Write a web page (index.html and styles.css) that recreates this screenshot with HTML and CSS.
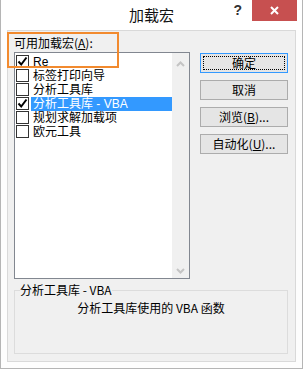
FILE: index.html
```html
<!DOCTYPE html>
<html lang="zh-CN">
<head>
    <meta charset="UTF-8">
    <title>加载宏</title>
    <link rel="stylesheet" href="styles.css">
</head>
<body>
    <div class="window">
        <div class="titlebar">
            <span></span>
            <span class="title">加载宏</span>
            <div class="controls">
                <span class="help">?</span>
                <span class="close">
                    <svg width="9" height="9" viewBox="0 0 9 9"><path d="M1 1 L8 8 M8 1 L1 8" stroke="#fff" stroke-width="2"/></svg>
                </span>
            </div>
        </div>

        <div class="panel">
            <div class="main">
                <div class="label">可用加载宏(<u>A</u>):</div>

                <div class="listbox">
                    <div class="items">
                        <div class="item">
                            <span class="box checked"><svg width="11" height="11" viewBox="0 0 11 11"><path d="M1.5 5.5 L4.2 8.5 L9.5 1.5" fill="none" stroke="#000" stroke-width="2"/></svg></span>
                            <span class="text">Re</span>
                        </div>
                        <div class="item">
                            <span class="box"></span>
                            <span class="text">标签打印向导</span>
                        </div>
                        <div class="item">
                            <span class="box"></span>
                            <span class="text">分析工具库</span>
                        </div>
                        <div class="item selected">
                            <span class="box checked"><svg width="11" height="11" viewBox="0 0 11 11"><path d="M1.5 5.5 L4.2 8.5 L9.5 1.5" fill="none" stroke="#000" stroke-width="2"/></svg></span>
                            <span class="text">分析工具库 - VBA</span>
                        </div>
                        <div class="item">
                            <span class="box"></span>
                            <span class="text">规划求解加载项</span>
                        </div>
                        <div class="item">
                            <span class="box"></span>
                            <span class="text">欧元工具</span>
                        </div>
                    </div>
                    <div class="scrollbar">
                        <svg width="9" height="6" viewBox="0 0 9 6"><path d="M1 5 L4.5 1.5 L8 5" fill="none" stroke="#c4c4c4" stroke-width="2"/></svg>
                        <svg width="9" height="6" viewBox="0 0 9 6"><path d="M1 1 L4.5 4.5 L8 1" fill="none" stroke="#c4c4c4" stroke-width="2"/></svg>
                    </div>
                </div>

                <div class="buttons">
                    <button class="btn default">确定</button>
                    <button class="btn">取消</button>
                    <button class="btn">浏览(<u>B</u>)...</button>
                    <button class="btn">自动化(<u>U</u>)...</button>
                </div>
            </div>

            <fieldset class="group">
                <legend>分析工具库 - VBA</legend>
                <div class="desc">分析工具库使用的 VBA 函数</div>
            </fieldset>
        </div>

        <!-- orange callout drawn over the label -->
        <div class="callout"></div>
    </div>
</body>
</html>
```

FILE: styles.css
```css
/* Windows 8 style dialog */
body {
    margin: 0;
    padding: 0;
    background: #fff;
    font-family: "Noto Sans CJK SC", sans-serif;
    font-size: 12px;
    color: #000;
}

.window {
    position: relative;
    width: 303px;
    height: 369px;
    box-sizing: border-box;
    border: 1px solid #b5b5b5;
    border-top: none;
    background: #fdfdfd;
}

/* Title bar */
.titlebar {
    display: grid;
    grid-template-columns: 1fr auto 1fr;
    height: 30px;
    background: #fff;
}

.title {
    font-size: 15px;
    line-height: 30px;
    color: #111;
}

.controls {
    display: flex;
    align-items: flex-start;
    justify-self: end;
    margin-right: 5px;
}

.help {
    font-family: "Liberation Sans", sans-serif;
    font-weight: bold;
    font-size: 14px;
    line-height: 20px;
    color: #333;
    margin-right: 10px;
}

.close {
    display: flex;
    align-items: center;
    justify-content: center;
    width: 45px;
    height: 21px;
    background: #c75050;
}

/* Client area */
.panel {
    height: 332px;
    box-sizing: border-box;
    margin: 0 6px;
    padding: 4px 6px 0;
    border: 1px solid #d9d9d9;
    background: #f0f0f0;
}

.main {
    display: grid;
    grid-template-columns: 176px 88px;
    column-gap: 10px;
}

.label {
    grid-column: 1 / 3;
    height: 16px;
    line-height: 16px;
    margin-bottom: 1px;
}

.listbox {
    display: flex;
    height: 227px;
    box-sizing: border-box;
    border: 1px solid #828790;
    background: #fff;
}

.items {
    flex: 1;
    padding: 2px 0 0 1px;
}

.item {
    display: flex;
    height: 14px;
    line-height: 14px;
    font-family: "Liberation Sans", "Noto Sans CJK SC", sans-serif;
}

.box {
    display: flex;
    align-items: center;
    justify-content: center;
    width: 13px;
    height: 13px;
    box-sizing: border-box;
    border: 1px solid #333;
    background: #fff;
}

.text {
    flex: 1;
    margin-left: 2px;
    padding-left: 2px;
    white-space: nowrap;
}

.item.selected .text {
    background: #3399ff;
    color: #fff;
}

.scrollbar {
    display: flex;
    flex-direction: column;
    justify-content: space-between;
    align-items: center;
    width: 17px;
    padding: 8px 0 4px;
    box-sizing: border-box;
    background: #f0f0f0;
}

/* Buttons */
.buttons {
    display: flex;
    flex-direction: column;
    gap: 7px;
    padding-top: 1px;
}

.btn {
    position: relative;
    width: 88px;
    height: 20px;
    padding: 0;
    border: 1px solid #acacac;
    background: #e5e5e5;
    font-family: "Noto Sans CJK SC", sans-serif;
    font-size: 12px;
    line-height: 18px;
    color: #000;
}

.btn.default {
    border-color: #3399ff;
}

.btn.default::after {
    content: "";
    position: absolute;
    top: 2px;
    left: 2px;
    right: 2px;
    bottom: 2px;
    border: 1px dotted #000;
}

/* Description group */
.group {
    width: 274px;
    box-sizing: border-box;
    margin: 4px 0 0;
    padding: 0;
    border: 1px solid #dcdcdc;
}

.group legend {
    margin-left: 5px;
    padding: 0;
    line-height: 14px;
}

.desc {
    height: 56px;
    box-sizing: border-box;
    padding-top: 3px;
    line-height: 16px;
    text-align: center;
}

/* Annotation */
.callout {
    position: absolute;
    left: 6px;
    top: 32px;
    width: 112px;
    height: 36px;
    box-sizing: border-box;
    border: 2px solid #f28a2e;
}
```
